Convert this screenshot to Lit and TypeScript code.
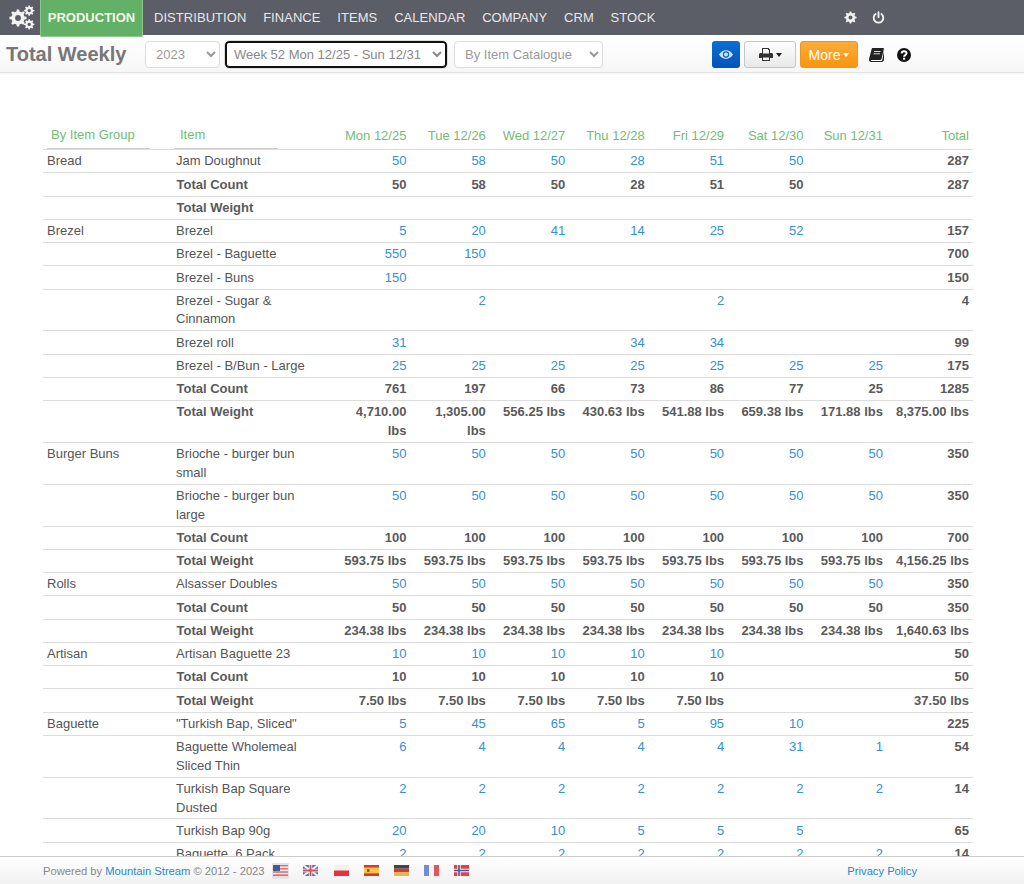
import { LitElement, html, css, svg } from "lit";
import { customElement } from "lit/decorators.js";

type Row = { g?: string; n: string; v: (string | number | null)[]; t?: boolean };
const _ = null;
const w = (...a: (string | null)[]) => a;
const rows: Row[] = [
  { g: "Bread", n: "Jam Doughnut", v: [50, 58, 50, 28, 51, 50, _, 287] },
  { n: "Total Count", t: true, v: [50, 58, 50, 28, 51, 50, _, 287] },
  { n: "Total Weight", t: true, v: [_, _, _, _, _, _, _, _] },
  { g: "Brezel", n: "Brezel", v: [5, 20, 41, 14, 25, 52, _, 157] },
  { n: "Brezel - Baguette", v: [550, 150, _, _, _, _, _, 700] },
  { n: "Brezel - Buns", v: [150, _, _, _, _, _, _, 150] },
  { n: "Brezel - Sugar & Cinnamon", v: [_, 2, _, _, 2, _, _, 4] },
  { n: "Brezel roll", v: [31, _, _, 34, 34, _, _, 99] },
  { n: "Brezel - B/Bun - Large", v: [25, 25, 25, 25, 25, 25, 25, 175] },
  { n: "Total Count", t: true, v: [761, 197, 66, 73, 86, 77, 25, 1285] },
  { n: "Total Weight", t: true, v: w("4,710.00 lbs", "1,305.00 lbs", "556.25 lbs", "430.63 lbs", "541.88 lbs", "659.38 lbs", "171.88 lbs", "8,375.00 lbs") },
  { g: "Burger Buns", n: "Brioche - burger bun small", v: [50, 50, 50, 50, 50, 50, 50, 350] },
  { n: "Brioche - burger bun large", v: [50, 50, 50, 50, 50, 50, 50, 350] },
  { n: "Total Count", t: true, v: [100, 100, 100, 100, 100, 100, 100, 700] },
  { n: "Total Weight", t: true, v: w("593.75 lbs", "593.75 lbs", "593.75 lbs", "593.75 lbs", "593.75 lbs", "593.75 lbs", "593.75 lbs", "4,156.25 lbs") },
  { g: "Rolls", n: "Alsasser Doubles", v: [50, 50, 50, 50, 50, 50, 50, 350] },
  { n: "Total Count", t: true, v: [50, 50, 50, 50, 50, 50, 50, 350] },
  { n: "Total Weight", t: true, v: w("234.38 lbs", "234.38 lbs", "234.38 lbs", "234.38 lbs", "234.38 lbs", "234.38 lbs", "234.38 lbs", "1,640.63 lbs") },
  { g: "Artisan", n: "Artisan Baguette 23", v: [10, 10, 10, 10, 10, _, _, 50] },
  { n: "Total Count", t: true, v: [10, 10, 10, 10, 10, _, _, 50] },
  { n: "Total Weight", t: true, v: w("7.50 lbs", "7.50 lbs", "7.50 lbs", "7.50 lbs", "7.50 lbs", null, null, "37.50 lbs") },
  { g: "Baguette", n: '"Turkish Bap, Sliced"', v: [5, 45, 65, 5, 95, 10, _, 225] },
  { n: "Baguette Wholemeal Sliced Thin", v: [6, 4, 4, 4, 4, 31, 1, 54] },
  { n: "Turkish Bap Square Dusted", v: [2, 2, 2, 2, 2, 2, 2, 14] },
  { n: "Turkish Bap 90g", v: [20, 20, 10, 5, 5, 5, _, 65] },
  { n: "Baguette, 6 Pack", v: [2, 2, 2, 2, 2, 2, 2, 14] },
];
const days = ["Mon 12/25", "Tue 12/26", "Wed 12/27", "Thu 12/28", "Fri 12/29", "Sat 12/30", "Sun 12/31"];
const nav = ["DISTRIBUTION", "FINANCE", "ITEMS", "CALENDAR", "COMPANY", "CRM", "STOCK"];

function gearPath(cx: number, cy: number, ro: number, ri: number, hole: number, teeth: number) {
  let d = "";
  const step = (Math.PI * 2) / teeth;
  for (let i = 0; i < teeth; i++) {
    const a = i * step - Math.PI / 2;
    const pts: [number, number][] = [
      [a - step * 0.3, ri], [a - step * 0.17, ro], [a + step * 0.17, ro], [a + step * 0.3, ri],
    ];
    for (const [t, r] of pts) {
      d += (d ? "L" : "M") + (cx + Math.cos(t) * r).toFixed(2) + " " + (cy + Math.sin(t) * r).toFixed(2);
    }
  }
  d += `ZM${cx - hole} ${cy}a${hole} ${hole} 0 1 0 ${hole * 2} 0a${hole} ${hole} 0 1 0 ${-hole * 2} 0Z`;
  return d;
}

const cogs = html`<svg class="logo" viewBox="0 0 26 26" fill="#f2f2f2">
  <path fill-rule="evenodd" d=${gearPath(9, 14, 8.6, 6.6, 2.9, 8)}/>
  <path fill-rule="evenodd" d=${gearPath(20.2, 6.6, 5.2, 3.9, 1.7, 8)}/>
  <path fill-rule="evenodd" d=${gearPath(20.2, 20.4, 5.2, 3.9, 1.7, 8)}/>
</svg>`;
const cog = html`<svg class="ic13" viewBox="0 0 14 14" fill="#f2f2f2"><path fill-rule="evenodd" d=${gearPath(7, 7, 6.6, 5, 2.2, 8)}/></svg>`;
const power = html`<svg class="ic13" viewBox="0 0 14 14" fill="none" stroke="#f2f2f2" stroke-width="2" stroke-linecap="round"><path d="M3.9 3.2a5.2 5.2 0 1 0 6.2 0"/><path d="M7 1.2v5.4"/></svg>`;
const eye = html`<svg class="eye" viewBox="0 0 16 12"><path fill="#cfe0f7" fill-rule="evenodd" d="M0 6C2 2.6 4.8 1 8 1s6 1.6 8 5c-2 3.4-4.8 5-8 5S2 9.400 0 6Zm8-3.600a3.600 3.600 0 1 0 0 7.200 3.600 3.600 0 0 0 0-7.200Z"/><circle cx="8" cy="6" r="2.300" fill="#cfe0f7"/></svg>`;
const printer = html`<svg class="print" viewBox="0 0 14 13" fill="#333"><path fill-rule="evenodd" d="M3 0h6.500L11 1.500V5h1.500c.8 0 1.500.7 1.500 1.500V10h-3v3H3v-3H0V6.500C0 5.700.7 5 1.500 5H3ZM4 1v4.500h6V2H9V1Zm0 8.500V12h6V9.500Z"/></svg>`;
const book = html`<svg class="book" viewBox="0 0 15 14"><path fill="#222" d="M4 0h10.300c.5 0 .7.400.6.800L12.500 11c-.2.700-.7 1-1.300 1H2.600c-.6 0-.8.500-.6.800.2.200.4.200.8.200h9.700c.4 0 .6-.2.700-.5L15 3v8.500c0 1.300-1 2.500-2.300 2.500H2.300C1 14 0 13 0 11.700c0-.4 0-.6.100-.9L2.600 1.200C2.800.500 3.300 0 4 0Z"/><path stroke="#eee" stroke-width=".9" d="M5 3.500h6.500M4.500 5.800H11"/></svg>`;
const help = html`<svg class="help" viewBox="0 0 14 14"><circle cx="7" cy="7" r="7" fill="#111"/><path fill="none" stroke="#fff" stroke-width="2" d="M4.600 5.300C4.800 3.900 5.800 3.300 7.100 3.300c1.300 0 2.400.8 2.400 2 0 1.800-2.400 1.700-2.400 3.400"/><rect x="6" y="9.700" width="2.200" height="2" fill="#fff"/></svg>`;

const flag = (c: unknown, sel = false) => html`<span class="flagbox"><span class="flagin ${sel ? "sel" : ""}"><svg class="flag" viewBox="0 0 15 11" preserveAspectRatio="none">${c}</svg></span></span>`;
const stripes = (cs: string[], vertical = false) =>
  cs.map((x, i) =>
    vertical
      ? svg`<rect x=${(i * 15) / cs.length} y="0" width=${15 / cs.length} height="11" fill=${x}/>`
      : svg`<rect x="0" y=${(i * 11) / cs.length} width="15" height=${11 / cs.length} fill=${x}/>`);
const flags = [
  flag(svg`${stripes(["#d9666c", "#f4f0f0", "#d9666c", "#f4f0f0", "#d9666c", "#f4f0f0", "#d9666c"])}<rect width="7" height="6" fill="#3f5a94"/>`, true),
  flag(svg`<rect width="15" height="11" fill="#5a6ea8"/><path d="M0 0L15 11M15 0L0 11" stroke="#f3eeee" stroke-width="2"/><path d="M7.500 0v11M0 5.500h15" stroke="#f3eeee" stroke-width="3.400"/><path d="M7.500 0v11M0 5.500h15" stroke="#d5505c" stroke-width="1.800"/>`),
  flag(svg`${stripes(["#f6f1f1", "#e4323f"])}`),
  flag(svg`${stripes(["#d8343a", "#f2c53a", "#f2c53a", "#d8343a"])}<rect x="3" y="4" width="2.500" height="3" fill="#b5463a"/>`),
  flag(svg`${stripes(["#444", "#d0383a", "#e6bb3c"])}`),
  flag(svg`${stripes(["#6f8fd0", "#f5f2f2", "#e2565c"], true)}`),
  flag(svg`<rect width="15" height="11" fill="#e0404c"/><path d="M5 0v11M0 5.500h15" stroke="#f5f1f1" stroke-width="3.400"/><path d="M5 0v11M0 5.500h15" stroke="#3f5a94" stroke-width="1.600"/>`),
];

@customElement("app-root")
export class AppRoot extends LitElement {
  static styles = css`
    :host { display: flex; flex-direction: column; height: 884px; overflow: hidden; background: #fff;
      font-family: "Liberation Sans", Arial, sans-serif; font-size: 13px; color: #555; }
    .top { flex: none; height: 35px; background: #5b5d67; display: flex; position: relative; z-index: 2; }
    .logo { width: 26px; height: 26px; margin: 4px 5px 0 9px; }
    .tab { flex: none; width: 103px; height: 37px; box-sizing: border-box; background: #62b166; border: 1px solid #8cc88f; border-top: 0;
      color: #f4fbe8; font-weight: 700; line-height: 35px; text-align: center; margin-right: 11px; border-radius: 0 0 2px 2px; }
    .links { display: flex; gap: 16.800px; line-height: 35px; color: #e8e8ea; letter-spacing: .05px; }
    .rt { margin-left: auto; display: flex; gap: 15px; align-items: center; margin-right: 139px; }
    .ic13 { width: 13px; height: 13px; display: block; }
    .sub { flex: none; height: 38px; box-sizing: border-box; background: linear-gradient(#fff, #f6f6f6); border-bottom: 1px solid #e2e2e2;
      box-shadow: 0 1px 2px rgba(0,0,0,.05); display: flex; align-items: flex-start; padding-top: 6px; }
    h1 { margin: 0; width: 145px; padding-left: 6px; box-sizing: border-box; font-size: 20px; line-height: 27px; font-weight: 700; color: #777; flex: none; }
    select { height: 27px; box-sizing: border-box; border: 1px solid #ddd; border-radius: 4px; background: #fff; color: #999;
      font: 13px "Liberation Sans", Arial, sans-serif; padding: 0 6px; flex: none; }
    .s1 { width: 75px; margin-right: 5px; }
    .s2 { width: 222px; margin-right: 7px; color: #888; border: 2px solid #111; outline: 1px solid #ddd; padding: 0 3px; }
    .s3 { width: 149px; }
    .btns { display: flex; margin-left: 109px; align-items: center; height: 27px; }
    .btn { height: 27px; box-sizing: border-box; border-radius: 3px; display: flex; align-items: center; justify-content: center; flex: none; }
    .blue { width: 28px; background: linear-gradient(#0a6fd6, #0153b8); margin-right: 4px; }
    .gray { width: 52px; background: linear-gradient(#fff, #e8e8e8); border: 1px solid #c6c6c6; margin-right: 4px; gap: 3px; }
    .more { width: 58px; background: linear-gradient(#fdac39, #f8950f); color: #fff; border: 1px solid #e8962a; gap: 3px; font-size: 14px; margin-right: 11px; }
    .caret { width: 0; height: 0; border: 3.500px solid transparent; border-top: 4px solid currentColor; border-bottom: 0; }
    .gray .caret { color: #222; }
    .eye { width: 14px; height: 11px; }
    .print { width: 14px; height: 13px; }
    .book { width: 15px; height: 14px; margin-right: 13px; }
    .help { width: 14px; height: 14px; }
    main { flex: 1; min-height: 0; overflow: hidden; padding: 52px 51px 0 43px; }
    table { border-collapse: collapse; table-layout: fixed; width: 930px; }
    th { font-weight: 400; color: #74bd74; text-align: right; padding: 0 4px 3px; height: 21px; vertical-align: bottom; line-height: 18.570px; border-bottom: 1px solid #ddd; }
    th.l { text-align: left; padding: 0 0 0 4px; vertical-align: bottom; }
    .flt { display: block; width: 103px; box-sizing: border-box; padding: 0 0 3px 4px; border-bottom: 1px solid #ccc; margin-bottom: 0; }
    th.i .flt { margin-left: -2px; padding-left: 6px; width: 104px; }
    td { padding: 2.400px 4px 1.310px; line-height: 18.570px; vertical-align: top; border-bottom: 1px solid #ddd; text-align: right; color: #3490d0; overflow-wrap: normal; }
    td.g, td.n { text-align: left; color: #555; }
    td.n { padding-right: 26px; }
    td.b { font-weight: 700; color: #5a5a5a; }
    td.n.b { padding-left: 4.500px; }
    footer { flex: none; height: 28px; box-sizing: border-box; border-top: 1px solid #ccc; background: linear-gradient(#fff, #f1f1f1);
      display: flex; align-items: center; padding: 0 107px 0 43px; font-size: 11.200px; color: #888; position: relative; z-index: 2; }
    a { color: #2a88c8; text-decoration: none; }
    .flags { display: flex; margin-left: 1px; }
    .flagbox { width: 30.200px; height: 18px; display: flex; align-items: center; justify-content: center; }
    .flagin { display: block; padding: 2.500px 1px; }
    .flagin.sel { background: #e4e4e4; border-radius: 1px; }
    .flag { width: 15px; height: 11px; display: block; }
    .pp { margin-left: auto; }
  `;
  render() {
    return html`
      <div class="top">${cogs}<div class="tab">PRODUCTION</div>
        <div class="links">${nav.map((n) => html`<span>${n}</span>`)}</div>
        <div class="rt">${cog}${power}</div></div>
      <div class="sub"><h1>Total Weekly</h1>
        <select class="s1"><option>2023</option></select>
        <select class="s2"><option>Week 52 Mon 12/25 - Sun 12/31</option></select>
        <select class="s3"><option>By Item Catalogue</option></select>
        <div class="btns">
          <div class="btn blue">${eye}</div>
          <div class="btn gray">${printer}<span class="caret"></span></div>
          <div class="btn more">More<span class="caret"></span></div>
          ${book}${help}
        </div></div>
      <main><table>
        <colgroup><col style="width:129px"><col style="width:159px">${days.map(() => html`<col style="width:79.430px">`)}<col style="width:86px"></colgroup>
        <thead><tr><th class="l"><span class="flt">By Item Group</span></th><th class="l i"><span class="flt">Item</span></th>
          ${days.map((d) => html`<th>${d}</th>`)}<th>Total</th></tr></thead>
        <tbody>${rows.map((r) => html`<tr>
          <td class="g">${r.g ?? ""}</td><td class="n ${r.t ? "b" : ""}">${r.n}</td>
          ${r.v.map((x, i) => html`<td class=${r.t || i === 7 ? "b" : ""}>${x ?? ""}</td>`)}
        </tr>`)}</tbody>
      </table></main>
      <footer><span>Powered by <a>Mountain Stream</a> © 2012 - 2023</span>
        <div class="flags">${flags}</div><a class="pp">Privacy Policy</a></footer>`;
  }
}
